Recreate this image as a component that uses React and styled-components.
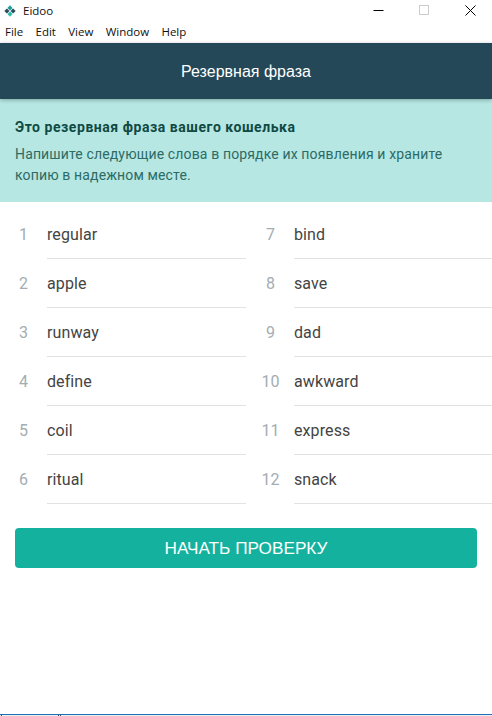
import styled, { createGlobalStyle } from "styled-components"

const words = [
    ["regular", "bind"],
    ["apple", "save"],
    ["runway", "dad"],
    ["define", "awkward"],
    ["coil", "express"],
    ["ritual", "snack"],
]

const App = () => {
    return (
        <>
            <GlobalStyle />
            <Window>
                <TitleBar>
                    <AppIcon viewBox="0 0 12 12">
                        <path d="M6 0.3 L8.6 2.9 L6 5.5 L3.4 2.9 Z" fill="#1f9e94" />
                        <path d="M2.9 3.4 L5.5 6 L2.9 8.6 L0.3 6 Z" fill="#2a4d5e" />
                        <path d="M9.1 3.4 L11.7 6 L9.1 8.6 L6.5 6 Z" fill="#2a4d5e" />
                        <path d="M6 6.5 L8.6 9.1 L6 11.7 L3.4 9.1 Z" fill="#2bbcab" />
                    </AppIcon>
                    <AppName>Eidoo</AppName>
                    <WindowButtons>
                        <svg width="11" height="11" viewBox="0 0 11 11">
                            <path d="M0.5 5.5 H10.5" stroke="#000" strokeWidth="1" />
                        </svg>
                        <svg width="11" height="11" viewBox="0 0 11 11">
                            <rect x="0.5" y="0.5" width="9" height="9" fill="none" stroke="#ccc" strokeWidth="1" />
                        </svg>
                        <svg width="11" height="11" viewBox="0 0 11 11">
                            <path d="M0.5 0.5 L10.5 10.5 M10.5 0.5 L0.5 10.5" stroke="#000" strokeWidth="1" />
                        </svg>
                    </WindowButtons>
                </TitleBar>
                <MenuBar>
                    <span>File</span>
                    <span>Edit</span>
                    <span>View</span>
                    <span>Window</span>
                    <span>Help</span>
                </MenuBar>
                <Header>Резервная фраза</Header>
                <Notice>
                    <NoticeTitle>Это резервная фраза вашего кошелька</NoticeTitle>
                    <NoticeText>
                        Напишите следующие слова в порядке их появления и храните копию в надежном месте.
                    </NoticeText>
                </Notice>
                <WordGrid>
                    {words.map((pair, i) => (
                        <WordRow key={i}>
                            <Word>
                                <WordIndex>{i + 1}</WordIndex>
                                <WordText>{pair[0]}</WordText>
                            </Word>
                            <Word>
                                <WordIndex>{i + 7}</WordIndex>
                                <WordText>{pair[1]}</WordText>
                            </Word>
                        </WordRow>
                    ))}
                </WordGrid>
                <StartBtn>НАЧАТЬ ПРОВЕРКУ</StartBtn>
                <Spacer />
                <TaskEdge>
                    <TaskTick $left={1} />
                    <TaskTick $left={56} />
                    <TaskTick $left={1} />
                </TaskEdge>
            </Window>
        </>
    )
}

const GlobalStyle = createGlobalStyle`
    html, body {
        margin: 0;
        padding: 0;
        background: #fff;
    }
`

const Window = styled.div`
    width: 492px;
    height: 716px;
    display: flex;
    flex-direction: column;
    overflow: hidden;
    font-family: Roboto, "Liberation Sans", sans-serif;
`

const TitleBar = styled.div`
    height: 21px;
    display: flex;
    align-items: center;
    padding-left: 4px;
    flex-shrink: 0;
`

const AppIcon = styled.svg`
    width: 12px;
    height: 12px;
`

const AppName = styled.span`
    margin-left: 7px;
    font-family: "Open Sans", sans-serif;
    font-size: 11.5px;
    color: #111;
`

const WindowButtons = styled.div`
    margin-left: auto;
    margin-right: 16px;
    display: flex;
    gap: 35px;
    align-items: center;
`

const MenuBar = styled.div`
    height: 22px;
    padding-bottom: 1px;
    box-sizing: border-box;
    display: flex;
    gap: 12.3px;
    align-items: center;
    padding-left: 5px;
    font-family: "Open Sans", sans-serif;
    font-size: 11.5px;
    color: #111;
    flex-shrink: 0;
`

const Header = styled.div`
    height: 56px;
    padding-top: 1px;
    box-sizing: border-box;
    background: #244858;
    color: #fff;
    display: flex;
    align-items: center;
    justify-content: center;
    font-family: "Liberation Sans", sans-serif;
    font-size: 16px;
    box-shadow: 0 1px 4px rgba(0, 0, 0, 0.3);
    position: relative;
    flex-shrink: 0;
`

const Notice = styled.div`
    background: #b6e7e2;
    padding: 20px 15px 16px;
    height: 103px;
    box-sizing: border-box;
    flex-shrink: 0;
`

const NoticeTitle = styled.div`
    font-size: 14px;
    font-weight: 700;
    color: #0f4a44;
    line-height: 16px;
    letter-spacing: 0.55px;
`

const NoticeText = styled.div`
    margin-top: 9px;
    font-size: 14px;
    line-height: 21px;
    color: #2c6b66;
    letter-spacing: 0.14px;
`

const WordGrid = styled.div`
    display: flex;
    flex-direction: column;
    padding-top: 8px;
`

const WordRow = styled.div`
    display: grid;
    grid-template-columns: 247px 245px;
`

const Word = styled.div`
    height: 49px;
    display: flex;
    align-items: stretch;
    &:first-child > div:last-child {
        margin-right: 1px;
    }
`

const WordIndex = styled.div`
    width: 47px;
    flex-shrink: 0;
    display: flex;
    align-items: center;
    justify-content: center;
    font-size: 16px;
    color: #a3adb3;
`

const WordText = styled.div`
    flex: 1;
    display: flex;
    align-items: center;
    border-bottom: 1px solid #e2e2e2;
    font-size: 16px;
    letter-spacing: 0.1px;
    color: #444;
`

const StartBtn = styled.button`
    margin: 24px 15px 0;
    height: 40px;
    padding: 1px 0 0;
    flex-shrink: 0;
    border: none;
    border-radius: 4px;
    background: #14b29e;
    color: #fff;
    font-family: "Liberation Sans", sans-serif;
    font-size: 17.2px;
`

const Spacer = styled.div`
    flex: 1;
`

const TaskEdge = styled.div`
    height: 2px;
    box-sizing: border-box;
    border-top: 1px solid #1f6fb5;
    background: #e9eef2;
    flex-shrink: 0;
    display: flex;
`

const TaskTick = styled.div`
    width: 1px;
    height: 1px;
    margin-left: ${(props) => props.$left}px;
    background: #3a4a5a;
`

export default App
